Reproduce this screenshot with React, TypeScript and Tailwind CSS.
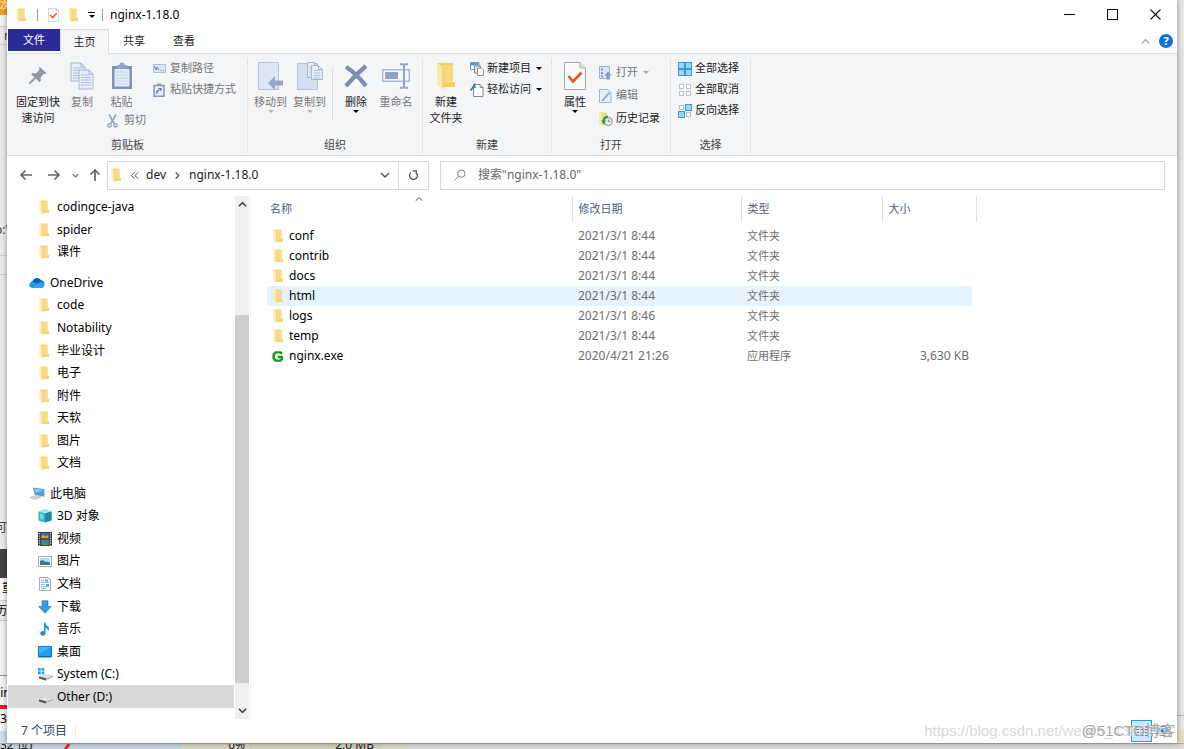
import React from "react";
import type { ReactNode } from "react";

type IconProps = { className?: string };

const FolderIcon = ({ className = "h-[14px] w-[11px]" }: IconProps) => (
  <svg className={className} viewBox="0 0 11 14" preserveAspectRatio="none" aria-hidden="true">
    <path d="M1 .5h7.500v9.500h1.500v3H3z" fill="#f5d377" />
    <path d="M3.500 1.500h5V10l-5 1z" fill="#f9dc88" />
    <path d="M.5.500 3.600 2v11.800L.5 12z" fill="#fceab4" />
    <path d="M3.600 2v11.700" stroke="#efc765" strokeWidth=".6" />
  </svg>
);

const BigFolderIcon = () => (
  <svg className="h-[28px] w-[20px]" viewBox="0 0 20 28" aria-hidden="true">
    <path d="M2 1h15v19h2v5H5z" fill="#f6cd62" />
    <path d="M7 3h10v17l-10 2z" fill="#fbd978" />
    <path d="M1 1l6 4v22l-6-4z" fill="#fce9a9" />
    <path d="M7 5v22" stroke="#e8bb50" strokeWidth=".7" />
  </svg>
);

const CheckPageIcon = ({ className = "h-[28px] w-[22px]" }: IconProps) => (
  <svg className={className} viewBox="0 0 22 28" aria-hidden="true">
    <path d="M.5.500h15.500l5.500 5.500v21.500H.5z" fill="#fafafa" stroke="#a5a9ad" />
    <path d="M16 .5V6h5.500" fill="#e3e5e7" stroke="#a5a9ad" />
    <path d="M4.500 14l4.500 5.500 8.500-9" fill="none" stroke="#e8561f" strokeWidth="2.600" />
  </svg>
);

const PinIcon = () => (
  <svg className="h-[20px] w-[20px]" viewBox="0 0 22 22" aria-hidden="true">
    <path d="M13 1l7.500 7-2 .8-1.200-.3-3.600 4.300.5 3.200-1.600 1.700-9.100-8.600 1.700-1.500 3.200.6 4.200-3.800-.5-1.600z" fill="#8f979e" />
    <path d="M8.500 12.500L1.500 19.500" stroke="#8f979e" strokeWidth="2" />
  </svg>
);

const PageLines = ({ x, y, w, h }: { x: number; y: number; w: number; h: number }) => (
  <g>
    <path d={`M${x} ${y}h${w - 4}l4 4v${h - 4}h${-w}z`} fill="#e6eef9" stroke="#9db2d2" strokeWidth=".9" />
    <path d={`M${x + w - 4} ${y}v4h4`} fill="none" stroke="#9db2d2" strokeWidth=".9" />
    {[5, 7.5, 10, 12.5, 15].filter((v) => v < h - 1).map((v) => (
      <path key={v} d={`M${x + 2} ${y + v}h${w - 4}`} stroke="#a9bddb" strokeWidth=".9" />
    ))}
  </g>
);

const CopyIcon = () => (
  <svg className="h-[28px] w-[24px]" viewBox="0 0 24 28" aria-hidden="true">
    <PageLines x={1} y={1} w={14} h={18} />
    <PageLines x={9} y={8} w={14} h={19} />
  </svg>
);

const PasteIcon = () => (
  <svg className="h-[28px] w-[22px]" viewBox="0 0 22 28" aria-hidden="true">
    <path d="M1 4h20v23H1z" fill="#7f94b6" />
    <path d="M3.500 7h15v17.500h-15z" fill="#e2ebf8" />
    <path d="M6 3h2.500a2.500 2.500 0 015 0H16v4H6z" fill="#92a5c4" />
    <path d="M5 10h12M5 13h12M5 16h12M5 19h12M5 22h12" stroke="#c6d5ea" />
  </svg>
);

const ScissorsIcon = () => (
  <svg className="h-[14px] w-[11px]" viewBox="0 0 11 14" aria-hidden="true">
    <path d="M2 .5l5.200 9M9 .5l-5.200 9" stroke="#8d9fbe" strokeWidth="1.500" />
    <circle cx="2.500" cy="11.300" r="1.700" fill="none" stroke="#8d9fbe" strokeWidth="1.300" />
    <circle cx="8.500" cy="11.300" r="1.700" fill="none" stroke="#8d9fbe" strokeWidth="1.300" />
  </svg>
);

const PathIcon = () => (
  <svg className="h-[9px] w-[13px]" viewBox="0 0 13 9" aria-hidden="true">
    <path d="M.5.500h12v8H.5z" fill="#dbe5f3" stroke="#afbfd9" />
    <path d="M1.500 2l1.500 4 1.200-3 1.500 3.200M7.500 6.500h1M10 6.500h1" fill="none" stroke="#6f88b3" />
  </svg>
);

const ShortcutIcon = () => (
  <svg className="h-[14px] w-[12px]" viewBox="0 0 12 14" aria-hidden="true">
    <path d="M1 2.500h10v10.700H1z" fill="#e7eefa" stroke="#8599bb" strokeWidth="1.500" />
    <path d="M4 .5h4V3H4z" fill="#8599bb" />
    <path d="M3.500 10.500c0-2 .8-3 2.800-3.200" fill="none" stroke="#5d7bb0" strokeWidth="1.500" />
    <path d="M5 5h3.600v3.800z" fill="#5d7bb0" />
  </svg>
);

const MoveToIcon = () => (
  <svg className="h-[28px] w-[26px]" viewBox="0 0 26 28" aria-hidden="true">
    <path d="M.5.500h20v27H.5z" fill="#dde6f4" stroke="#b5c5de" />
    <path d="M10 21l7-7v4.500h8v5h-8V28z" fill="#94a8c8" />
  </svg>
);

const CopyToIcon = () => (
  <svg className="h-[28px] w-[26px]" viewBox="0 0 26 28" aria-hidden="true">
    <path d="M.5 1.500h20v26H.5z" fill="#d4dff0" stroke="#b5c5de" />
    <PageLines x={10.500} y={.500} w={11} h={15} />
    <PageLines x={14.500} y={3.500} w={11} h={14} />
  </svg>
);

const DeleteIcon = () => (
  <svg className="h-[24px] w-[24px]" viewBox="0 0 24 24" aria-hidden="true">
    <path d="M2 3Q12 9 22 22M22 2Q11 11 2 22" fill="none" stroke="#7b8db0" strokeWidth="4.200" />
  </svg>
);

const RenameIcon = () => (
  <svg className="h-[26px] w-[28px]" viewBox="0 0 28 26" aria-hidden="true">
    <path d="M.7 6.700h26.600v11.600H.7z" fill="#f5f8fc" stroke="#a9b8d0" strokeWidth="1.400" />
    <path d="M3 9h13v7H3z" fill="#8fa3c4" />
    <path d="M18 1.200h2.500q1.500 0 1.500 1.500v20.600q0 1.500-1.500 1.500H18M26 1.200h-2.500Q22 1.200 22 2.700m4 22.100h-2.500q-1.500 0-1.500-1.500" fill="none" stroke="#8fa3c4" strokeWidth="2" />
  </svg>
);

const NewItemIcon = () => (
  <svg className="h-[14px] w-[14px]" viewBox="0 0 14 14" aria-hidden="true">
    <path d="M.5.500h8.500v7H.5z" fill="#fff" stroke="#8b9096" />
    <path d="M1 1h7.500v2.500H1z" fill="#50a7df" />
    <path d="M4.500 4h6v7h-6z" fill="#d7e8f7" stroke="#7d8c99" />
    <path d="M7.500 6h4l2 2v5.500h-6z" fill="#fff" stroke="#8b9096" />
  </svg>
);

const EasyAccessIcon = () => (
  <svg className="h-[14px] w-[14px]" viewBox="0 0 14 14" aria-hidden="true">
    <path d="M3.500 1.500h6.500l3 3v9H3.500z" fill="#fff" stroke="#85898d" />
    <path d="M10 1.500v3h3" fill="none" stroke="#85898d" />
    <path d="M0 7l4.500-6.500 2 .5-2 2.500h2l-1 1.500h-2L1.500 8z" fill="#2b80c4" />
  </svg>
);

const OpenIcon = () => (
  <svg className="h-[14px] w-[13px]" viewBox="0 0 13 14" aria-hidden="true">
    <path d="M.5.500h10v12H.5z" fill="#dce5f3" stroke="#a0b3d2" />
    <path d="M2 2.500h2v2H2zM2 6h2v2H2zM2 9.500h2v2H2z" fill="#8197bd" />
    <path d="M9 5.500l3.800 4h-2V13.500H7.200V9.500h-2z" fill="#899dbe" />
  </svg>
);

const EditIcon = () => (
  <svg className="h-[14px] w-[13px]" viewBox="0 0 13 14" aria-hidden="true">
    <path d="M.5.500h8.500l3 3v10H.5z" fill="#e5edf8" stroke="#a5b7d4" />
    <path d="M10.500 3.500L3 12" stroke="#8fa5c9" strokeWidth="1.700" />
  </svg>
);

const HistoryIcon = () => (
  <svg className="h-[14px] w-[14px]" viewBox="0 0 14 14" aria-hidden="true">
    <path d="M0 0l8 1v12H2l-2-1z" fill="#f6d671" />
    <path d="M0 0l3 2v11.500L0 12z" fill="#fceab0" />
    <circle cx="9.300" cy="9.500" r="4" fill="#eee" stroke="#888" />
    <path d="M9.300 7.500v2h2" fill="none" stroke="#777" />
    <path d="M4.500 9.500q0-4.500 4.500-4.800" fill="none" stroke="#27a548" strokeWidth="2.200" />
    <path d="M2 8.500h5.200l-2.400 4z" fill="#27a548" />
  </svg>
);

const TilesIcon = ({ on }: { on: boolean[] }) => (
  <svg className="h-[14px] w-[14px]" viewBox="0 0 14 14" aria-hidden="true">
    {on.map((active, i) => (
      <rect
        key={i}
        x={(i % 2) * 7 + (active ? 0.5 : 1.5)}
        y={Math.floor(i / 2) * 7 + (active ? 0.5 : 1.5)}
        width={active ? 6 : 4}
        height={active ? 6 : 4}
        fill={active ? "#9ad5fb" : "#fff"}
        stroke={active ? "#3b97dc" : "#bfc2c5"}
      />
    ))}
  </svg>
);

const Chevron = ({ d, className, w = 1.3 }: { d: string; className: string; w?: number }) => (
  <svg className={className} viewBox="0 0 10 10" fill="none" stroke="currentColor" strokeWidth={w} aria-hidden="true">
    <path d={d} />
  </svg>
);
const DOWN = "M1 3l4 4 4-4";
const UP = "M1 7l4-4 4 4";

const Caret = ({ className = "text-black" }: IconProps) => (
  <svg className={`h-[3px] w-[6px] shrink-0 ${className}`} viewBox="0 0 6 3" aria-hidden="true">
    <path d="M0 0h6L3 3z" fill="currentColor" />
  </svg>
);

const Arrow = ({ d }: { d: string }) => (
  <svg className="h-[14px] w-[14px]" viewBox="0 0 14 14" fill="none" stroke="#686868" strokeWidth="1.700" aria-hidden="true">
    <path d={d} />
  </svg>
);

/* Navigation tree icons */
const OneDriveIcon = () => (
  <svg className="h-[11px] w-[16px]" viewBox="0 0 16 11" aria-hidden="true">
    <path d="M3 9.500a3 3 0 01.5-5.500A4.800 4.800 0 0112 3.200a3.500 3.500 0 013 5z" fill="#0a5fbb" />
    <path d="M3.300 11a3 3 0 01-1-5.800Q5 4 7.500 6.500l5-1.700A3.200 3.200 0 0113 11z" fill="#1c97e8" />
    <path d="M2.500 10.500L11 6q3-.8 4.500 2-.2 2.800-2.700 3H3.500z" fill="#28a8ea" />
  </svg>
);
const PcIcon = () => (
  <svg className="h-[13px] w-[15px]" viewBox="0 0 15 13" aria-hidden="true">
    <path d="M3.500 1l10.500 1.500v6.800L5 7.500z" fill="#3fa9ea" stroke="#6f8796" strokeWidth=".7" />
    <path d="M4 1.500L13.500 3 6 6z" fill="#7fd0fa" />
    <path d="M0 10.500L6 8.500l5 1.500-6 2.500z" fill="#d2d6d9" stroke="#9aa0a5" strokeWidth=".5" />
  </svg>
);
const CubeIcon = () => (
  <svg className="h-[14px] w-[14px]" viewBox="0 0 14 14" aria-hidden="true">
    <path d="M.5 2.500L7 .5l6.500 2v9L7 13.500.5 11.500z" fill="#35b3cc" />
    <path d="M.5 2.500L7 .5l6.500 2L7 4.500z" fill="#a5e8f1" />
    <path d="M7 4.500l6.500-2v9L7 13.500z" fill="#178da9" />
    <path d="M2 4.500l3.500 1v5.500L2 10z" fill="#73d6e5" />
  </svg>
);
const VideoIcon = () => (
  <svg className="h-[14px] w-[14px]" viewBox="0 0 14 14" aria-hidden="true">
    <path d="M0 0h14v14H0z" fill="#3c3f45" />
    <path d="M1.500 1v13M12.500 1v13" stroke="#d4d7da" strokeWidth="1.200" strokeDasharray="1.200 1.200" />
    <path d="M3.300 1h7.400v5.500H3.300z" fill="#416ea8" />
    <path d="M3.300 7.500h7.400V13H3.300z" fill="#5678a7" />
    <path d="M3.300 4.500l2-2 2 2 3-1.500v3H3.300z" fill="#d9a735" />
    <path d="M3.300 11l3-2 4.400 3v1H3.300z" fill="#4e9148" />
  </svg>
);
const PictureIcon = () => (
  <svg className="h-[11px] w-[14px]" viewBox="0 0 14 11" aria-hidden="true">
    <path d="M.5.500h13v10H.5z" fill="#fff" stroke="#a6acb1" />
    <path d="M2 2h10v7H2z" fill="#b4dcf6" />
    <path d="M2 5q3-2 5 .8 3-.5 5 1V9H2z" fill="#3a7694" />
  </svg>
);
const DocIcon = () => (
  <svg className="h-[14px] w-[12px]" viewBox="0 0 12 14" aria-hidden="true">
    <path d="M.5.500H9l2.500 2.500v10.500H.5z" fill="#fff" stroke="#a3abb0" />
    <path d="M2 3.500h3M2 5.500h8M2 7.500h4M2 9.500h8M2 11.500h5" stroke="#7dbbe4" />
    <path d="M6 2.500h3v2H6zM7 7h3v2H7z" fill="#5ba7dc" />
  </svg>
);
const DownloadIcon = () => (
  <svg className="h-[14px] w-[14px]" viewBox="0 0 14 14" aria-hidden="true">
    <path d="M4 .7h6v5.800h3.300L7 13.300.700 6.500H4z" fill="#3a98e3" stroke="#1f78c4" strokeWidth=".6" />
  </svg>
);
const MusicIcon = () => (
  <svg className="h-[14px] w-[10px]" viewBox="0 0 10 14" aria-hidden="true">
    <path d="M4 .5h1.300Q5.500 3 8 4.500 10 6.500 8 9.500q.3-2.800-2.500-4v5.700A2.600 2.300 0 114 9.300z" fill="#1592e6" />
  </svg>
);
const DesktopIcon = () => (
  <svg className="h-[12px] w-[14px]" viewBox="0 0 14 12" aria-hidden="true">
    <path d="M.5.500h13v10.500H.5z" fill="#1ba1f7" stroke="#0b78c8" />
    <path d="M1 1h12L1 8z" fill="#45b7fb" />
    <path d="M1 10.500h12" stroke="#0a65ab" />
  </svg>
);
const DriveIcon = ({ system = false }: { system?: boolean }) => (
  <svg className="h-[14px] w-[15px]" viewBox="0 0 15 14" aria-hidden="true">
    <path d="M1 9.500l6-2.500 8 1.500v1.800L8 13.500l-7-2z" fill="#b7babd" />
    <path d="M1 9.500l6-2.500 8 1.500-7 2.500z" fill="#e2e4e6" />
    <path d="M1 9.500l7 1.700v2.300l-7-2z" fill="#54575a" />
    {system && <path d="M0 1h2.700v2.700H0zM3.500 1h2.700v2.700H3.500zM0 4.500h2.700v2.700H0zM3.500 4.500h2.700v2.700H3.500z" fill="#16a5ec" />}
  </svg>
);
const NginxIcon = () => (
  <svg className="h-[13px] w-[13px]" viewBox="0 0 13 13" aria-hidden="true">
    <path d="M10.800 3.800L9.300 2H4L1.800 4.300v4.400L4 11h5l1.800-1.800V7H6.300" fill="none" stroke="#109a16" strokeWidth="2.600" strokeLinejoin="round" />
  </svg>
);

/* Ribbon pieces */
type BigProps = { icon: ReactNode; lines: string[]; width: string; muted?: boolean; caret?: boolean };
const BigButton = ({ icon, lines, width, muted, caret }: BigProps) => (
  <button type="button" className={`flex flex-col items-center ${width} ${muted ? "text-[#777]" : "text-[#222]"}`}>
    <span className="mb-[2px] flex h-[32px] items-center justify-center">{icon}</span>
    {lines.map((l) => (
      <span key={l} className="whitespace-nowrap leading-[16px]">{l}</span>
    ))}
    {caret && <Caret className={muted ? "text-[#b5b5b5]" : "text-black"} />}
  </button>
);

type SmallProps = { icon: ReactNode; label: string; muted?: boolean; caret?: boolean; height?: string };
const SmallButton = ({ icon, label, muted, caret, height = "h-[21px]" }: SmallProps) => (
  <button type="button" className={`flex items-center whitespace-nowrap ${height} ${muted ? "text-[#777]" : "text-[#222]"}`}>
    <span className="flex w-[17px] shrink-0 items-center">{icon}</span>
    {label}
    {caret && <span className="ml-[5px] flex"><Caret className={muted ? "text-[#aaa]" : "text-black"} /></span>}
  </button>
);

const Group = ({ label, width, children }: { label: string; width: string; children: ReactNode }) => (
  <section aria-label={label} className={`flex shrink-0 flex-col border-r border-[#e1e3e5] ${width}`}>
    <div className="flex h-[79px] items-start">{children}</div>
    <div className="text-center leading-[16px] text-[#444]">{label}</div>
  </section>
);

const Ribbon = () => (
  <div className="flex border-y border-[#dcdddf] bg-[#f4f5f7] pb-[2px] pl-px pt-[4px] text-[11px]">
    <Group label="剪贴板" width="w-[240px]">
      <div className="flex pt-[2px]">
        <BigButton icon={<PinIcon />} lines={["固定到快", "速访问"]} width="w-[60px]" />
        <BigButton icon={<CopyIcon />} lines={["复制"]} width="w-[28px]" muted />
        <div>
          <BigButton icon={<PasteIcon />} lines={["粘贴"]} width="w-[51px]" muted />
          <div className="pl-[11px]">
            <SmallButton icon={<ScissorsIcon />} label="剪切" muted />
          </div>
        </div>
      </div>
      <div className="flex flex-col pl-[6px]">
        <SmallButton icon={<PathIcon />} label="复制路径" muted />
        <SmallButton icon={<ShortcutIcon />} label="粘贴快捷方式" muted />
      </div>
    </Group>
    <Group label="组织" width="w-[175px]">
      <div className="flex pl-[3px] pt-[2px]">
        <BigButton icon={<MoveToIcon />} lines={["移动到"]} width="w-[39px]" muted caret />
        <BigButton icon={<CopyToIcon />} lines={["复制到"]} width="w-[39px]" muted caret />
        <div className="mx-[3px] mt-[8px] h-[52px] w-px bg-[#dcdee1]" />
        <BigButton icon={<DeleteIcon />} lines={["删除"]} width="w-[40px]" caret />
        <BigButton icon={<RenameIcon />} lines={["重命名"]} width="w-[40px]" muted />
      </div>
    </Group>
    <Group label="新建" width="w-[129px]">
      <div className="pl-[3px] pt-[2px]">
        <BigButton icon={<BigFolderIcon />} lines={["新建", "文件夹"]} width="w-[40px]" />
      </div>
      <div className="flex flex-col pl-[4px]">
        <SmallButton icon={<NewItemIcon />} label="新建项目" caret />
        <SmallButton icon={<EasyAccessIcon />} label="轻松访问" caret />
      </div>
    </Group>
    <Group label="打开" width="w-[119px]">
      <div className="pl-[3px] pt-[2px]">
        <BigButton icon={<CheckPageIcon />} lines={["属性"]} width="w-[40px]" caret />
      </div>
      <div className="flex flex-col pl-[4px] pt-[3px]">
        <SmallButton icon={<OpenIcon />} label="打开" muted caret height="h-[23px]" />
        <SmallButton icon={<EditIcon />} label="编辑" muted height="h-[23px]" />
        <SmallButton icon={<HistoryIcon />} label="历史记录" height="h-[23px]" />
      </div>
    </Group>
    <Group label="选择" width="w-[80px]">
      <div className="flex flex-col pl-[7px]">
        <SmallButton icon={<TilesIcon on={[true, true, true, true]} />} label="全部选择" />
        <SmallButton icon={<TilesIcon on={[false, false, false, false]} />} label="全部取消" />
        <SmallButton icon={<TilesIcon on={[false, true, true, false]} />} label="反向选择" />
      </div>
    </Group>
  </div>
);

const TitleBar = () => (
  <header className="flex h-[29px] items-center">
    <div className="flex items-center pl-[9px]">
      <FolderIcon />
      <span className="ml-[10px] h-[12px] w-px bg-[#9a9a9a]" />
      <button type="button" aria-label="属性" className="ml-[10px]"><CheckPageIcon className="h-[14px] w-[11px]" /></button>
      <button type="button" aria-label="新建文件夹" className="ml-[9px] flex"><FolderIcon /></button>
      <button type="button" aria-label="自定义快速访问工具栏" className="ml-[9px] flex flex-col items-center gap-[2px]">
        <span className="h-px w-[7px] bg-black" />
        <Caret />
      </button>
      <span className="ml-[7px] h-[12px] w-px bg-[#9a9a9a]" />
    </div>
    <h1 className="ml-[7px] flex-1 text-[12px] text-black">nginx-1.18.0</h1>
    {[
      ["最小化", "M0 5.500h11"],
      ["最大化", "M.5.500h10v10H.5z"],
      ["关闭", "M.5.500l10 10M10.500.500l-10 10"],
    ].map(([name, d]) => (
      <button key={name} type="button" aria-label={name} className="flex h-full w-[43px] items-center justify-center">
        <svg className="h-[11px] w-[11px]" viewBox="0 0 11 11" fill="none" stroke="#111" strokeWidth="1.100" aria-hidden="true">
          <path d={d} />
        </svg>
      </button>
    ))}
  </header>
);

const Tabs = () => (
  <nav className="flex h-[24px] items-start pl-px text-[11px] text-[#222]">
    <button type="button" className="h-[22px] w-[52px] bg-[#2b2a99] text-white">文件</button>
    <button type="button" className="relative -mb-px h-[25px] w-[49px] border border-b-0 border-[#dcdddf] bg-[#f4f5f7]">主页</button>
    <button type="button" className="h-[24px] w-[50px]">共享</button>
    <button type="button" className="h-[24px] w-[50px]">查看</button>
    <div className="ml-auto flex h-[24px] items-center gap-[9px] pr-[4px]">
      <button type="button" aria-label="最小化功能区" className="text-[#9b9b9b]"><Chevron d={UP} className="h-[9px] w-[9px]" /></button>
      <button type="button" aria-label="帮助" className="h-[14px] w-[14px] rounded-full bg-[#0b74d1] text-[11px] font-bold leading-[14px] text-white">?</button>
    </div>
  </nav>
);

const AddressRow = () => (
  <div className="flex h-[38px] items-center pb-px pr-[12px] pt-px text-[12px] text-[#222]">
    <div className="flex w-[100px] shrink-0 items-center pl-[12px]">
      <button type="button" aria-label="后退"><Arrow d="M13 7H2M6.500 2.500L2 7l4.500 4.500" /></button>
      <button type="button" aria-label="前进" className="ml-[14px]"><Arrow d="M1 7h11M7.500 2.500L12 7l-4.500 4.500" /></button>
      <button type="button" aria-label="最近浏览的位置" className="ml-[11px] text-[#686868]"><Chevron d={DOWN} className="h-[7px] w-[7px]" w={1.900} /></button>
      <button type="button" aria-label="上移" className="ml-[9px]"><Arrow d="M7 13V2M2.500 6.500L7 2l4.500 4.500" /></button>
    </div>
    <div className="flex h-[29px] w-[322px] shrink-0 items-center border border-[#d9d9d9] pl-[3px]">
      <FolderIcon />
      <Chevron d="M5 1.500L1.500 5 5 8.500M9 1.500L5.500 5 9 8.500" className="ml-[8px] h-[9px] w-[9px] text-[#555]" w={1.100} />
      <button type="button" className="ml-[7px]">dev</button>
      <Chevron d="M3 1.500L6.500 5 3 8.500" className="ml-[7px] h-[9px] w-[9px] text-[#444]" />
      <button type="button" className="ml-[7px]">nginx-1.18.0</button>
      <button type="button" aria-label="上一个位置" className="ml-auto mr-[8px] text-[#555]"><Chevron d={DOWN} className="h-[10px] w-[10px]" w={1.500} /></button>
      <button type="button" aria-label="刷新" className="flex h-full w-[30px] items-center justify-center border-l border-[#d9d9d9]">
        <svg className="h-[11px] w-[11px]" viewBox="0 0 12 12" fill="none" stroke="#555" strokeWidth="1.400" aria-hidden="true">
          <path d="M3.200 2.800A4.300 4.300 0 108.800 2.800M5 1h4v4" />
        </svg>
      </button>
    </div>
    <label className="ml-[11px] flex h-[29px] flex-1 items-center border border-[#d9d9d9] pl-[13px]">
      <svg className="h-[12px] w-[12px] shrink-0" viewBox="0 0 13 13" fill="none" stroke="#777" strokeWidth="1" aria-hidden="true">
        <circle cx="8" cy="5" r="4" />
        <path d="M5 8l-4.500 4.500" />
      </svg>
      <input aria-label="搜索" placeholder={'搜索"nginx-1.18.0"'} className="ml-[12px] min-w-0 flex-1 bg-transparent outline-none placeholder:text-[#666]" />
    </label>
  </div>
);

/* Navigation pane */
type Node = { label: string; icon?: ReactNode; root?: boolean; selected?: boolean };

const TreeRow = ({ label, icon, root, selected }: Node) => (
  <li className="flex min-h-0 flex-1">
    <a
      href="#"
      className={`ml-px flex flex-1 items-center whitespace-nowrap ${root ? "pl-[20px]" : "pl-[29px]"} ${selected ? "bg-[#d9d9d9]" : ""}`}
    >
      <span className={`flex shrink-0 items-center justify-center ${root ? "mr-[4px] w-[18px]" : icon ? "mr-[4px] w-[16px]" : "mr-[6px] w-[14px]"}`}>
        {icon ?? <FolderIcon />}
      </span>
      {label}
    </a>
  </li>
);

const quick: Node[] = [{ label: "codingce-java" }, { label: "spider" }, { label: "课件" }];
const oneDrive: Node[] = [
  { label: "OneDrive", icon: <OneDriveIcon />, root: true },
  { label: "code" },
  { label: "Notability" },
  { label: "毕业设计" },
  { label: "电子" },
  { label: "附件" },
  { label: "天软" },
  { label: "图片" },
  { label: "文档" },
];
const thisPc: Node[] = [
  { label: "此电脑", icon: <PcIcon />, root: true },
  { label: "3D 对象", icon: <CubeIcon /> },
  { label: "视频", icon: <VideoIcon /> },
  { label: "图片", icon: <PictureIcon /> },
  { label: "文档", icon: <DocIcon /> },
  { label: "下载", icon: <DownloadIcon /> },
  { label: "音乐", icon: <MusicIcon /> },
  { label: "桌面", icon: <DesktopIcon /> },
  { label: "System (C:)", icon: <DriveIcon system /> },
  { label: "Other (D:)", icon: <DriveIcon />, selected: true },
];

const NavPane = () => (
  <aside className="flex w-[244px] shrink-0 border-r border-[#f3f3f3] text-[12px] text-black">
    <div className="flex flex-1 flex-col gap-[8px] pb-[11px]">
      <ul className="flex grow-3 basis-0 flex-col">{quick.map((n) => <TreeRow key={n.label} {...n} />)}</ul>
      <ul className="flex grow-9 basis-0 flex-col">{oneDrive.map((n) => <TreeRow key={n.label} {...n} />)}</ul>
      <ul className="flex grow-10 basis-0 flex-col">{thisPc.map((n) => <TreeRow key={n.label} {...n} />)}</ul>
    </div>
    <div className="ml-px mr-px flex w-[14px] flex-col items-center bg-[#f0f0f0] text-[#444]">
      <button type="button" aria-label="向上滚动" className="flex h-[17px] items-center"><Chevron d={UP} className="h-[9px] w-[9px]" w={1.800} /></button>
      <div className="flex w-full flex-1 flex-col">
        <div className="grow-21" />
        <div className="w-full grow-76 bg-[#cdcdcd]" />
        <div className="grow-4" />
      </div>
      <button type="button" aria-label="向下滚动" className="flex h-[17px] items-center"><Chevron d={DOWN} className="h-[9px] w-[9px]" w={1.800} /></button>
    </div>
  </aside>
);

/* File list */
const files = [
  { name: "conf", date: "2021/3/1 8:44", type: "文件夹", size: "" },
  { name: "contrib", date: "2021/3/1 8:44", type: "文件夹", size: "" },
  { name: "docs", date: "2021/3/1 8:44", type: "文件夹", size: "" },
  { name: "html", date: "2021/3/1 8:44", type: "文件夹", size: "" },
  { name: "logs", date: "2021/3/1 8:46", type: "文件夹", size: "" },
  { name: "temp", date: "2021/3/1 8:44", type: "文件夹", size: "" },
  { name: "nginx.exe", date: "2020/4/21 21:26", type: "应用程序", size: "3,630 KB" },
];

const FileList = () => (
  <main className="flex-1 pl-[16px]">
    <table className="w-[709px] table-fixed text-left text-[12px]">
      <colgroup>
        <col className="w-[305px]" />
        <col className="w-[169px]" />
        <col className="w-[141px]" />
        <col className="w-[90px]" />
        <col className="w-[4px]" />
      </colgroup>
      <thead className="text-[11px] text-[#4c607a]">
        <tr className="h-[26px]">
          <th scope="col" className="relative border-r border-[#e2e2e2] pl-[3px] font-normal">
            名称
            <span className="absolute inset-x-0 -top-px flex justify-center text-[#777]"><Chevron d={UP} className="h-[8px] w-[8px]" /></span>
          </th>
          <th scope="col" className="border-r border-[#e2e2e2] pl-[6px] font-normal">修改日期</th>
          <th scope="col" className="border-r border-[#e2e2e2] pl-[6px] font-normal">类型</th>
          <th scope="col" className="pl-[6px] font-normal">大小</th>
          <td className="border-r border-[#e2e2e2]" />
        </tr>
      </thead>
      <tbody className="text-[#6d6d6d] before:block before:h-[4px]">
        {files.map((f) => (
          <tr key={f.name} className="h-[20px] leading-[16px]">
            <td className={`pl-[5px] ${f.name === "html" ? "bg-[#e5f3ff]" : ""}`}>
              <a href="#" className="flex items-center text-black">
                <span className="mr-[5px] flex w-[12px] justify-center">{f.size ? <NginxIcon /> : <FolderIcon />}</span>
                {f.name}
              </a>
            </td>
            <td className={`pl-[6px] ${f.name === "html" ? "bg-[#e5f3ff]" : ""}`}>{f.date}</td>
            <td className={`pl-[6px] text-[11px] ${f.name === "html" ? "bg-[#e5f3ff]" : ""}`}>{f.type}</td>
            <td className={`pr-[3px] text-right ${f.name === "html" ? "bg-[#e5f3ff]" : ""}`}>{f.size}</td>
          </tr>
        ))}
      </tbody>
    </table>
  </main>
);

const StatusBar = () => (
  <footer className="relative flex h-[24px] items-center pl-[14px] pr-[7px] text-[12px] text-[#33475f]">
    <span>7 个项目</span>
    <span className="ml-[8px] h-[14px] w-px bg-[#ececec]" />
    <button type="button" aria-label="详细信息" className="ml-auto flex h-[22px] w-[21px] items-center justify-center border border-[#26a0da] bg-[#cce8f7]">
      <svg className="h-[13px] w-[15px]" viewBox="0 0 15 13" fill="none" stroke="#777" aria-hidden="true">
        <path d="M1 1.500h4M1 4.500h4M1 7.500h4M1 10.500h4M6.500 1.500h3M6.500 4.500h3M6.500 7.500h3M6.500 10.500h3M11 1.500h3M11 4.500h3M11 7.500h3M11 10.500h3" />
      </svg>
    </button>
    <button type="button" aria-label="大图标" className="ml-[5px]">
      <svg className="h-[10px] w-[13px]" viewBox="0 0 13 10" aria-hidden="true">
        <path d="M.5.500h12v9H.5z" fill="#fff" stroke="#888" />
        <path d="M2 2h9v4.500H2z" fill="#73b5e4" />
        <path d="M2 5.500l3-2 3 2.500H2z" fill="#28507a" />
      </svg>
    </button>
    <span className="pointer-events-none absolute right-[6px] top-px whitespace-nowrap font-['Liberation_Sans'] text-[15px] text-[#dadada]">
      https://blog.csdn.net/weixin_4387430
    </span>
    <span className="pointer-events-none absolute right-[2px] top-px whitespace-nowrap font-['Liberation_Sans','Noto_Sans_CJK_SC',sans-serif] text-[15px] text-[#a8a8a8]">
      @51CTO博客
    </span>
  </footer>
);

/* Edges of the windows that lie behind */
const LeftEdge = () => (
  <div className="flex w-[7px] shrink-0 flex-col overflow-hidden whitespace-nowrap bg-[#ebebeb] text-[12px] text-[#444]">
    <div className="h-[15px] bg-[#f3a11a] text-[10px] leading-[10px] text-white">次</div>
    <div className="h-[11px] bg-[#f3f3f3]" />
    <div className="flex h-[19px] items-center border-y border-[#d0d0d0] pl-[4px]">n</div>
    <div className="h-[176px]" />
    <div className="flex h-[34px] leading-[18px]"><span className="-ml-[5px]">o:\</span></div>
    <div className="h-[20px] border-y border-[#cbcbcb]" />
    <div className="h-[244px]" />
    <div className="flex h-[30px] items-start"><span className="-ml-[5px] leading-[18px]">可</span></div>
    <div className="h-[29px] bg-[#444]" />
    <div className="h-[22px] bg-[#fafafa] pl-[2px] leading-[20px] text-black">重</div>
    <div className="flex h-[21px] border-y border-[#cfcfcf] leading-[20px] text-black"><span className="-ml-[5px]">历史</span></div>
    <div className="h-[54px] bg-[#f3f3f3]" />
    <div className="flex h-[30px] border-t border-[#999] bg-[#f6f6f6] leading-[34px] text-black"><span className="-ml-[11px]">Win</span></div>
    <div className="h-[4px] bg-[#ef1d1d]" />
    <div className="h-[22px] bg-[#f6f6f6] leading-[20px] text-black">32</div>
    <div className="flex-1 bg-[#cfdfec]" />
  </div>
);

const BottomEdge = () => (
  <div className="flex h-[6px] shrink-0 overflow-hidden border-t border-[#b0b0b0] text-[12px] leading-[1px] text-[#222]">
    <div className="flex w-[182px] bg-[#c5d5e2]">
      <span>32 位)</span>
      <svg className="ml-[31px] h-[6px] w-[8px]" viewBox="0 0 8 6" aria-hidden="true"><path d="M6 0L2 6" stroke="#e22" strokeWidth="3" /></svg>
    </div>
    <div className="w-[69px] border-r border-[#c9c7b2] bg-[#d9d7c2] pr-[5px] text-right">0%</div>
    <div className="w-[130px] bg-[#d3d3bb] pr-[7px] text-right">2.0 MB</div>
    <div className="w-[24px] bg-[#dcd9c4]" />
    <div className="flex-1 bg-[#d9d9d9]" />
  </div>
);

export default function App() {
  return (
    <div className="flex h-screen flex-col overflow-hidden font-['Noto_Sans','Noto_Sans_CJK_SC',sans-serif]">
      <div className="flex min-h-0 flex-1">
        <LeftEdge />
        <div className="relative flex min-w-0 flex-1 flex-col bg-white shadow-[0_0_6px_rgba(0,0,0,0.4)]">
          <TitleBar />
          <Tabs />
          <Ribbon />
          <AddressRow />
          <div className="flex min-h-0 flex-1 pt-[2px]">
            <NavPane />
            <FileList />
          </div>
          <StatusBar />
        </div>
        <div className="flex w-[7px] shrink-0 flex-col bg-[#e6e6e6]">
          <div className="flex-1" />
          <div className="h-[16px] border-t border-[#bbb]" />
          <div className="h-[12px] bg-[#e6dfc3]" />
        </div>
      </div>
      <BottomEdge />
    </div>
  );
}
